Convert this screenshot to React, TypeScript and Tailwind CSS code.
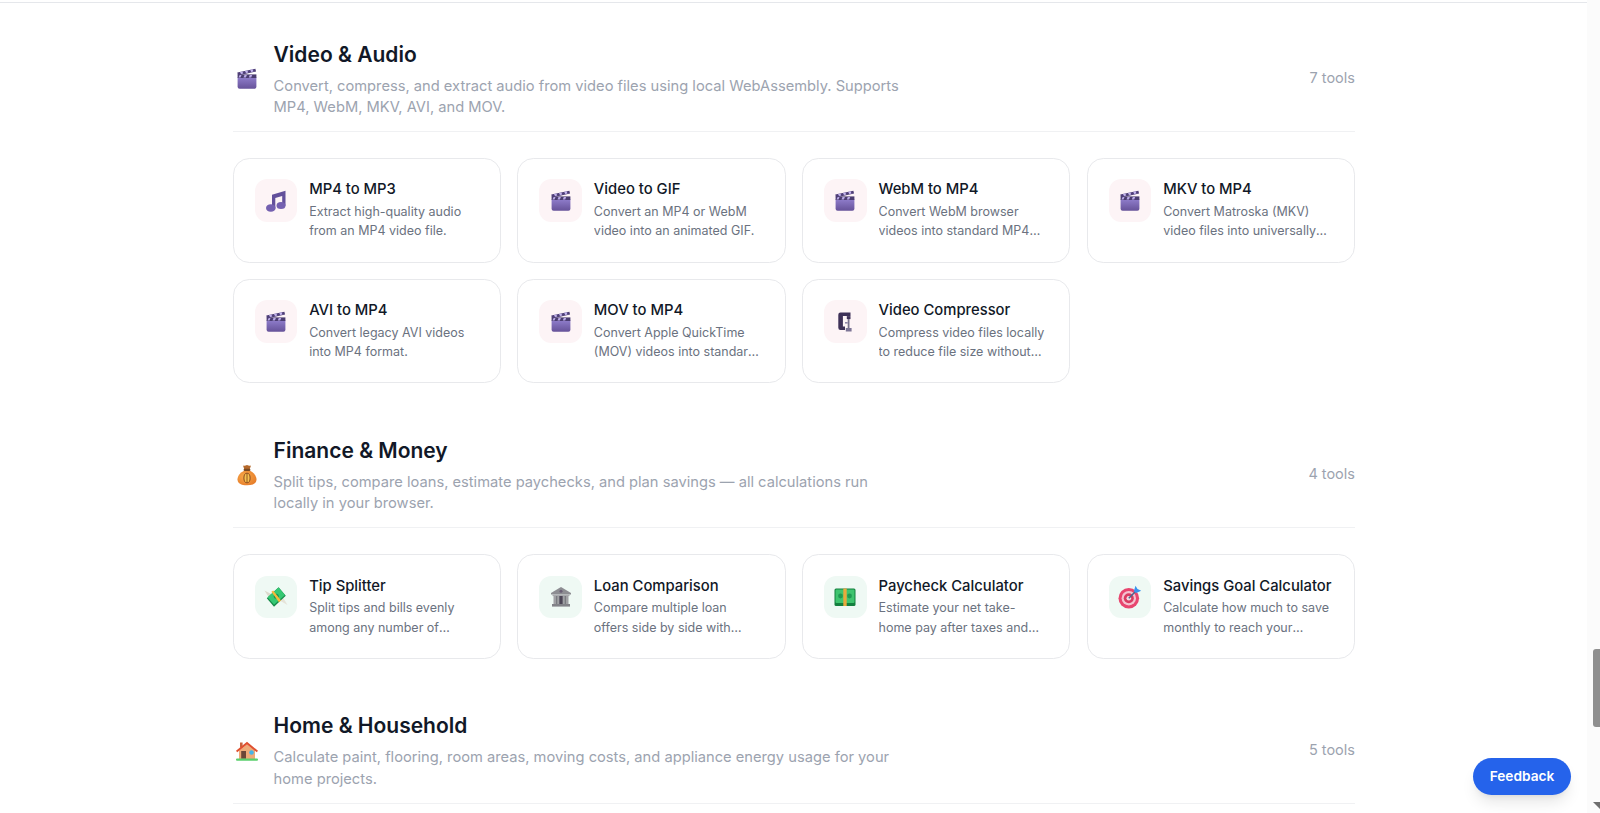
import React from "react";

const Clapper = ({ s = 24 }: { s?: number }) => (
  <svg width={s} height={s} viewBox="0 0 24 24">
    <defs>
      <linearGradient id="clapg" x1="0" y1="0" x2="0" y2="1">
        <stop offset="0" stopColor="#8f7dcb" />
        <stop offset="1" stopColor="#665299" />
      </linearGradient>
    </defs>
    <path d="M2.600 10.200h18.800v9.600a2 2 0 0 1-2 2H4.600a2 2 0 0 1-2-2z" fill="url(#clapg)" />
    <path d="M2.600 7.400h18.800v3.600H2.600z" fill="#4a3c70" />
    <path d="M4.500 8h2l-1 2.400h-2zM9.500 8h2.400l-1 2.400H8.500zM14.800 8h2.400l-1 2.400h-2.400z" fill="#b9a9e6" />
    <path d="M2.300 5.500 20.400 1.700l.7 2.900L3 8.400z" fill="#4f3f78" />
    <path d="M5 5l2.300-.5 1 2.100-2.300.5zM10 3.900l2.300-.5 1 2.100-2.300.5zM15.200 2.800l2.300-.5 1 2.100-2.300.5z" fill="#c3b5ee" />
  </svg>
);

const MusicNote = ({ s = 24 }: { s?: number }) => (
  <svg width={s} height={s} viewBox="0 0 24 24">
    <path d="M8 5.800 21.500 1.800v15h-3.300V7.100l-6.900 2v10.500H8z" fill="#63509b" />
    <ellipse cx="6.800" cy="19" rx="4.800" ry="3.800" fill="#7460b0" />
    <ellipse cx="17" cy="16.600" rx="4.500" ry="3.500" fill="#7460b0" />
  </svg>
);

const ClampIcon = ({ s = 24 }: { s?: number }) => (
  <svg width={s} height={s} viewBox="0 0 24 24">
    <path d="M17.500 2.500H7.500a2.200 2.200 0 0 0-2.200 2.200v13.100a2.200 2.200 0 0 0 2.200 2.200h4.500v-3.600H9.900V6.100h7.600z" fill="#3e3158" />
    <path d="M13.800 6.100h3.700v3h-3.700z" fill="#3e3158" />
    <path d="M14.700 9h1.800v9h-1.800z" fill="#78718c" />
    <path d="M12 12h2.700v1.600H12z" fill="#8f86a8" />
    <path d="M12.800 18h5.800v3.500h-5.800z" fill="#7d7596" />
  </svg>
);

const MoneyWings = ({ s = 24 }: { s?: number }) => (
  <svg width={s} height={s} viewBox="0 0 24 24">
    <path d="M0.500 5.500 10 10.500 6.500 15z" fill="#dcd9cc" />
    <path d="M23.500 20 14 14.500 17.500 10z" fill="#e5e3d8" />
    <path d="M2.800 13.200 14.600 2.200 21.800 10.800 10 21.800z" fill="#168a48" />
    <path d="M3.500 12.300 14.500 2.500 21 10 10 19.800z" fill="#35c873" />
    <circle cx="12.300" cy="11.200" r="2.500" fill="#189150" />
    <path d="M7.400 6.800 9.200 5.400 17 15.500 15 17.200z" fill="#f5b93a" />
  </svg>
);

const Bank = ({ s = 24 }: { s?: number }) => (
  <svg width={s} height={s} viewBox="0 0 24 24">
    <path d="M12 2 22 8v1.600H2V8z" fill="#8d8d92" />
    <circle cx="12" cy="6.300" r="1.500" fill="#6a5f75" />
    <path d="M3.500 9.600h17v1.500h-17z" fill="#a9a9ad" />
    <path d="M4.500 11h2.600v8H4.500zM8.600 11h1.600v8H8.600zM13.800 11h1.600v8h-1.600zM16.900 11h2.600v8h-2.600z" fill="#a0a0a4" />
    <path d="M10.200 11h3.600v8h-3.600z" fill="#4c4656" />
    <path d="M7.100 11h1.500v8H7.100zM15.400 11h1.500v8h-1.500z" fill="#6e6e74" />
    <path d="M3 19h18v2.600H3z" fill="#828288" />
  </svg>
);

const Banknote = ({ s = 24 }: { s?: number }) => (
  <svg width={s} height={s} viewBox="0 0 24 24">
    <rect x="1.500" y="3.500" width="21" height="17.500" rx="1.500" fill="#14803f" />
    <rect x="2.500" y="4.500" width="19" height="13.500" rx="1" fill="#3fc46f" />
    <circle cx="7.500" cy="11" r="2.400" fill="#1f9a52" />
    <circle cx="16.500" cy="11" r="2.400" fill="#1f9a52" />
    <path d="M10.300 3.500h3.400V21h-3.400z" fill="#e9a93c" />
  </svg>
);

const Dart = ({ s = 24 }: { s?: number }) => (
  <svg width={s} height={s} viewBox="0 0 24 24">
    <circle cx="10.800" cy="13.200" r="10.300" fill="#e8466f" />
    <circle cx="10.800" cy="13.200" r="7.200" fill="#f4c3d0" />
    <circle cx="10.800" cy="13.200" r="5" fill="#d93c62" />
    <circle cx="10.800" cy="13.200" r="2.300" fill="#f2dde3" />
    <path d="m10.800 13.200 7.700-7.700" stroke="#4d6690" strokeWidth="1.600" />
    <path d="M15.800 6.200 17.500.8l2 3.300 3.700 1.600-5 2.200z" fill="#3b94ee" />
  </svg>
);

const MoneyBag = ({ s = 24 }: { s?: number }) => (
  <svg width={s} height={s} viewBox="0 0 24 24">
    <defs>
      <radialGradient id="bagg" cx="0.4" cy="0.4" r="0.7">
        <stop offset="0" stopColor="#f9ab4a" />
        <stop offset="1" stopColor="#e57a28" />
      </radialGradient>
    </defs>
    <path d="M9 7.800C4.500 10 2.500 13.500 2.500 16.500c0 3.800 3.500 5.800 9.500 5.800s9.500-2 9.500-5.800c0-3-2-6.500-6.500-8.700z" fill="url(#bagg)" />
    <path d="M8 2.400c1.300.6 2.600.2 4-.4 1.400.6 2.700 1 4 .4L14.800 6H9.200z" fill="#b5692b" />
    <rect x="8.600" y="5.800" width="6.800" height="2.200" rx="1" fill="#7a4a22" />
    <ellipse cx="12" cy="15" rx="3.100" ry="4.800" fill="#f6c14f" stroke="#8a4b1d" strokeWidth="1" />
    <path d="M12 11v8" stroke="#8a4b1d" strokeWidth="0.900" />
  </svg>
);

const House = ({ s = 24 }: { s?: number }) => (
  <svg width={s} height={s} viewBox="0 0 24 24">
    <path d="M5 3.500h2.600v5H5z" fill="#c9623d" />
    <path d="M4 11.500 12 5.500l8 6V20H4z" fill="#eeab78" />
    <path d="M12 2.800 1 11.800l1.200 1.500L12 5.400l9.800 7.900 1.200-1.500z" fill="#e0502f" />
    <rect x="6.200" y="12" width="4.800" height="7.800" fill="#6b4637" />
    <circle cx="16.500" cy="13.500" r="2.300" fill="#45b4ea" />
    <rect x="1" y="19.600" width="22" height="2.200" rx="1" fill="#5bcf6d" />
  </svg>
);

type Tool = { t: string; d: string; i: React.ReactNode };
type Section = { title: string; desc: string; count: string; icon: React.ReactNode; tint: string; tools: Tool[] };

const sections: Section[] = [
  {
    title: "Video & Audio",
    desc: "Convert, compress, and extract audio from video files using local WebAssembly. Supports MP4, WebM, MKV, AVI, and MOV.",
    count: "7 tools",
    icon: <Clapper />,
    tint: "bg-[#fdf4f6]",
    tools: [
      { t: "MP4 to MP3", d: "Extract high-quality audio from an MP4 video file.", i: <MusicNote /> },
      { t: "Video to GIF", d: "Convert an MP4 or WebM video into an animated GIF.", i: <Clapper /> },
      { t: "WebM to MP4", d: "Convert WebM browser videos into standard MP4 files for any device.", i: <Clapper /> },
      { t: "MKV to MP4", d: "Convert Matroska (MKV) video files into universally playable MP4.", i: <Clapper /> },
      { t: "AVI to MP4", d: "Convert legacy AVI videos into MP4 format.", i: <Clapper /> },
      { t: "MOV to MP4", d: "Convert Apple QuickTime (MOV) videos into standard MP4 format files.", i: <Clapper /> },
      { t: "Video Compressor", d: "Compress video files locally to reduce file size without losing quality.", i: <ClampIcon /> },
    ],
  },
  {
    title: "Finance & Money",
    desc: "Split tips, compare loans, estimate paychecks, and plan savings — all calculations run locally in your browser.",
    count: "4 tools",
    icon: <MoneyBag />,
    tint: "bg-[#eff9f4]",
    tools: [
      { t: "Tip Splitter", d: "Split tips and bills evenly among any number of people at the table.", i: <MoneyWings /> },
      { t: "Loan Comparison", d: "Compare multiple loan offers side by side with monthly payment details.", i: <Bank /> },
      { t: "Paycheck Calculator", d: "Estimate your net take-home pay after taxes and other deductions today.", i: <Banknote /> },
      { t: "Savings Goal Calculator", d: "Calculate how much to save monthly to reach your financial goal on time.", i: <Dart /> },
    ],
  },
  {
    title: "Home & Household",
    desc: "Calculate paint, flooring, room areas, moving costs, and appliance energy usage for your home projects.",
    count: "5 tools",
    icon: <House />,
    tint: "bg-[#eff9f4]",
    tools: [],
  },
];

export default function App() {
  return (
    <div className="relative h-[813px] w-[1600px] overflow-hidden bg-white font-['Inter',sans-serif]">
      <div className="h-[3px] border-b border-[#e5e7eb]" />
      <main className="ml-[232.600px] flex w-[1122.400px] flex-col gap-[52.400px] pt-[36.700px]">
        {sections.map((s) => (
          <section key={s.title}>
            <header className="flex items-center justify-between border-b border-[#f0f1f3] pb-[12.500px]">
              <div className="flex items-center gap-[14.500px]">
                <div className="ml-[2px] w-[24.500px] shrink-0">{s.icon}</div>
                <div>
                  <h2 className="text-[21px] font-semibold leading-[29.500px] text-[#111827]">{s.title}</h2>
                  <p className="mt-[6.500px] max-w-[640px] text-[14.700px] leading-[21.500px] text-[#9ca3af]">{s.desc}</p>
                </div>
              </div>
              <span className="-translate-y-px text-[14.500px] text-[#9ca3af]">{s.count}</span>
            </header>
            {s.tools.length > 0 && (
              <div className="mt-[25.800px] grid grid-cols-4 gap-[16.300px]">
                {s.tools.map((c) => (
                  <div key={c.t} className="flex h-[104.600px] items-start gap-[11.800px] rounded-[16.300px] border border-[#e8e9ec] bg-white pl-[21px] pr-[23px] pt-[20.400px]">
                    <div className={`flex h-[42.800px] w-[42.800px] shrink-0 items-center justify-center rounded-[12.200px] ${s.tint}`}>{c.i}</div>
                    <div className="min-w-0">
                      <h3 className="whitespace-nowrap text-[14.800px] font-medium leading-[20.400px] text-[#111827]">{c.t}</h3>
                      <p className="mt-[2.500px] line-clamp-2 text-[12.500px] leading-[19.100px] text-[#6b7280]">{c.d}</p>
                    </div>
                  </div>
                ))}
              </div>
            )}
          </section>
        ))}
      </main>
      <div className="absolute right-0 top-0 h-full w-[13px] bg-[#fbfbfb]">
        <div className="absolute right-0 top-[649px] h-[78px] w-[7px] rounded-l-[3px] bg-[#8f8f8f]" />
        <svg className="absolute right-0 top-[802px]" width="7" height="7" viewBox="0 0 7 7"><path d="M0 0h7v7z" fill="#6f6f6f" /></svg>
      </div>
      <button className="absolute left-[1473px] top-[758px] h-[37px] w-[98px] rounded-full bg-[#2563eb] text-[13.700px] font-semibold text-white shadow-lg">Feedback</button>
    </div>
  );
}
